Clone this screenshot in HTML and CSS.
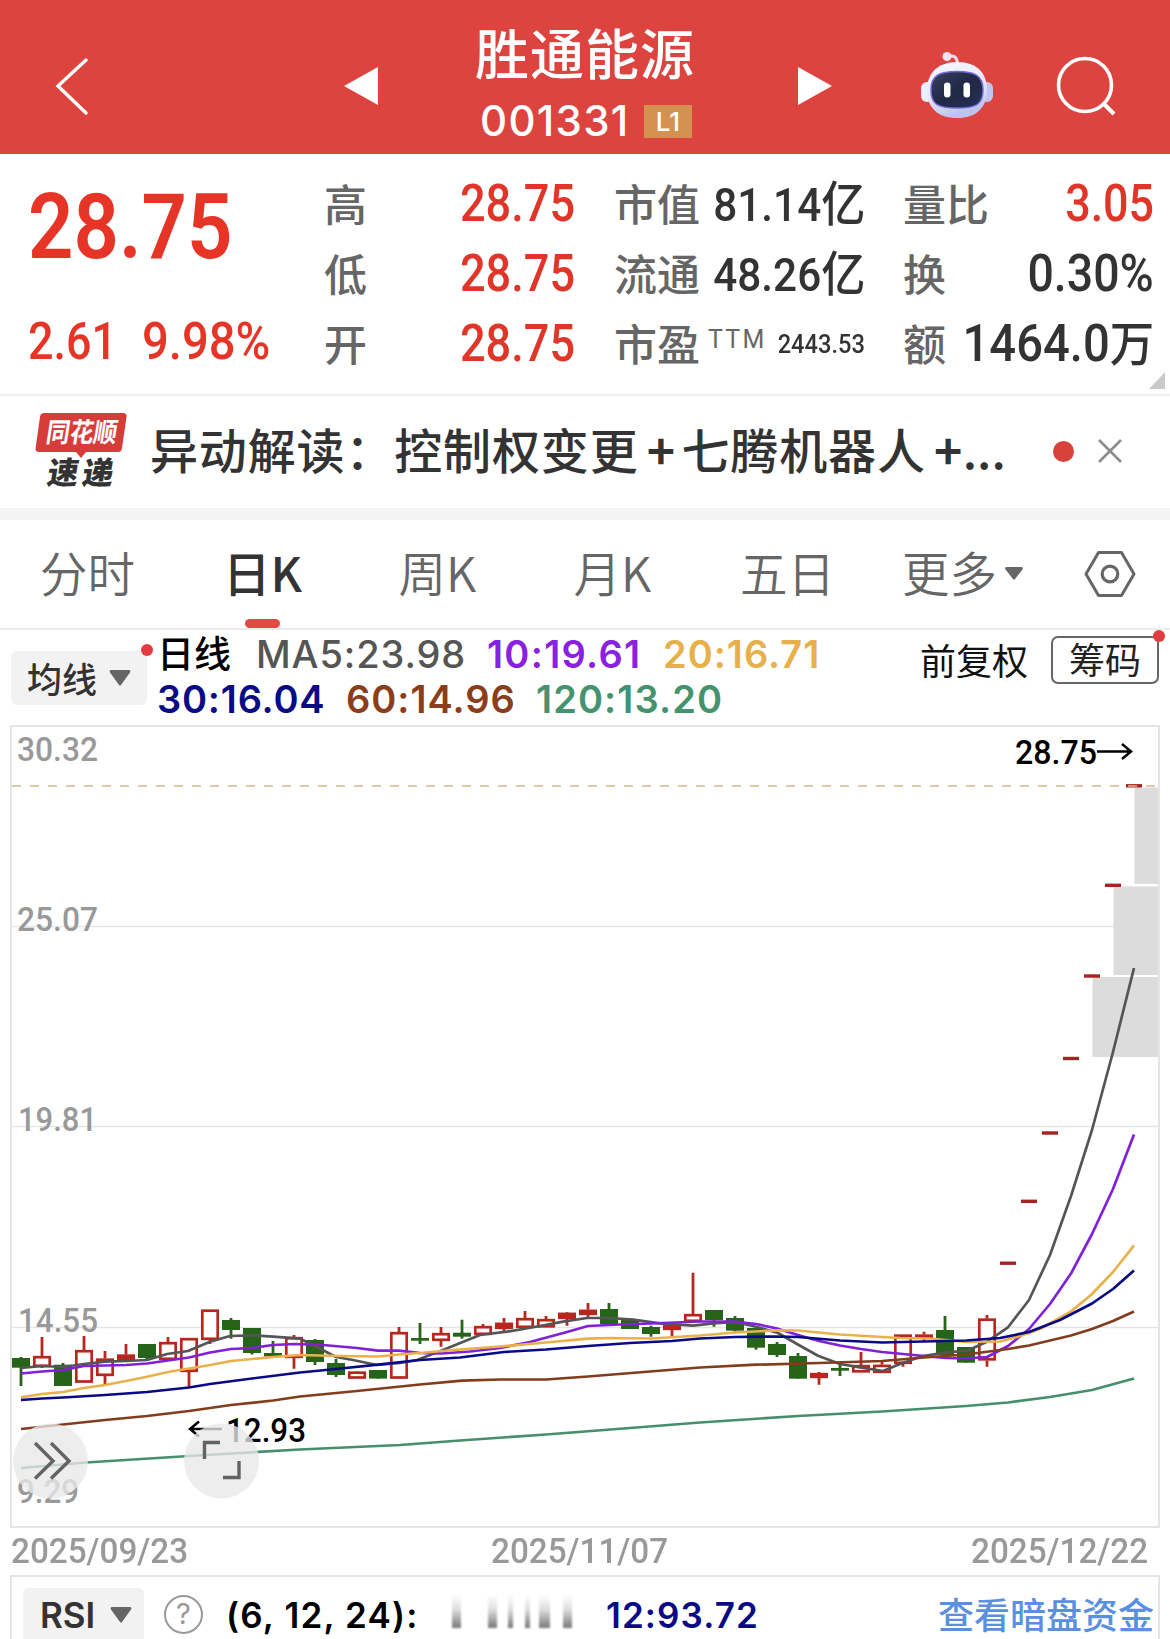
FILE: index.html
```html
<!DOCTYPE html>
<html lang="zh-CN">
<head>
<meta charset="utf-8">
<title>胜通能源 001331</title>
<link rel="stylesheet" href="styles.css">
</head>
<body>
<header class="topbar">
  <svg class="back" width="36" height="62" viewBox="0 0 36 62"><path d="M32 5 L4 31 L32 58" fill="none" stroke="#fff" stroke-width="3.4" stroke-linecap="round"/></svg>
  <svg class="prev" width="34" height="38" viewBox="0 0 34 38"><path d="M0 19 L34 0 V38 Z" fill="#fff"/></svg>
  <div class="stock">
    <h1>胜通能源</h1>
    <div class="code"><span>001331</span><b>L1</b></div>
  </div>
  <svg class="next" width="34" height="38" viewBox="0 0 34 38"><path d="M34 19 L0 0 V38 Z" fill="#fff"/></svg>
  <svg class="robot" width="74" height="70" viewBox="0 0 74 70">
    <defs>
      <linearGradient id="shell" x1="0" y1="0" x2="0.3" y2="1"><stop offset="0" stop-color="#fbfaff"/><stop offset=".65" stop-color="#e3e4fa"/><stop offset="1" stop-color="#bcc3ee"/></linearGradient>
      <linearGradient id="face" x1="0" y1="0" x2="1" y2="1"><stop offset="0" stop-color="#39425f"/><stop offset=".5" stop-color="#202845"/><stop offset="1" stop-color="#263154"/></linearGradient>
    </defs>
    <path d="M27 7 Q37 3 37.500 14" fill="none" stroke="#eed9e6" stroke-width="3"/>
    <circle cx="27" cy="6.500" r="4.500" fill="#f4e3ec"/>
    <rect x="1" y="32" width="12" height="20" rx="6" fill="#eeeeff"/>
    <rect x="61" y="32" width="12" height="20" rx="6" fill="#c3c5f1"/>
    <path d="M37 12 C58 12 67 24 67 40 C67 58 56 68 37 68 C18 68 7 58 7 40 C7 24 17 12 37 12Z" fill="url(#shell)"/>
    <path d="M37 21.500 C54 21.500 63 25 63 40 C63 54 57 58 37 58 C17 58 11 54 11 40 C11 25 20 21.500 37 21.500Z" fill="url(#face)" stroke="#7567d8" stroke-width="1.500"/>
    <rect x="24" y="32.500" width="6.500" height="15" rx="3.200" fill="#fff"/>
    <rect x="43.500" y="32.500" width="6.500" height="15" rx="3.200" fill="#fff"/>
  </svg>
  <svg class="search" width="64" height="64" viewBox="0 0 64 64"><circle cx="31" cy="31" r="26.500" fill="none" stroke="#fff" stroke-width="3.600"/><path d="M49 49 L60 60" stroke="#fff" stroke-width="4"/></svg>
</header>

<section class="quote">
  <div class="price">
    <strong class="din">28.75</strong>
    <div class="change"><span class="din">2.61</span><span class="din pct">9.98%</span></div>
  </div>
  <dl class="col c2">
    <div><dt>高</dt><dd class="up">28.75</dd></div>
    <div><dt>低</dt><dd class="up">28.75</dd></div>
    <div><dt>开</dt><dd class="up">28.75</dd></div>
  </dl>
  <dl class="col c3">
    <div><dt>市值</dt><dd>81.14<i>亿</i></dd></div>
    <div><dt>流通</dt><dd>48.26<i>亿</i></dd></div>
    <div><dt>市盈<sup>TTM</sup></dt><dd class="small">2443.53</dd></div>
  </dl>
  <dl class="col c4">
    <div><dt>量比</dt><dd class="up">3.05</dd></div>
    <div><dt>换</dt><dd>0.30%</dd></div>
    <div><dt>额</dt><dd class="amount">1464.0<i>万</i></dd></div>
  </dl>
  <svg class="corner" width="16" height="17" viewBox="0 0 16 17"><path d="M16 0 V17 H0Z" fill="#c9c9c9"/></svg>
</section>

<section class="news">
  <svg class="brand" width="94" height="84" viewBox="0 0 94 84">
    <path d="M9 2 H88 Q92 2 91.500 6 L87 37 Q86.500 41 83 41 H51 L46 47 L41 41 H4 Q0 41 .600 37 L5 6 Q5.500 2 9 2Z" fill="#d73c3a"/>
    <text class="brand-a" transform="translate(10 31) skewX(-9)" textLength="71" lengthAdjust="spacingAndGlyphs">同花顺</text>
    <text class="brand-b" transform="translate(11 73) skewX(-9)" textLength="66" lengthAdjust="spacing">速递</text>
  </svg>
  <p>异动解读：控制权变更<span class="plus">+</span>七腾机器人<span class="plus">+</span><span class="dots">...</span></p>
  <i class="dot"></i>
  <svg class="close" width="26" height="26" viewBox="0 0 26 26"><path d="M2 2 L24 24 M24 2 L2 24" stroke="#8c8c8c" stroke-width="2.600"/></svg>
</section>

<nav class="tabs">
  <a>分时</a><a class="on">日K</a><a>周K</a><a>月K</a><a>五日</a>
  <a>更多<svg width="18" height="13" viewBox="0 0 18 13"><path d="M1 0 H17 Q18.500 1 17.500 2.500 L10 12 Q9 13.500 8 12 L.500 2.500 Q-.500 1 1 0Z" fill="#666"/></svg></a>
  <span class="gear"><svg width="52" height="48" viewBox="0 0 52 48"><path d="M14.500 2.500 H37.500 L50 24 L37.500 45.500 H14.500 L2 24Z" fill="none" stroke="#666" stroke-width="3" stroke-linejoin="round"/><circle cx="26" cy="24" r="7.800" fill="none" stroke="#666" stroke-width="3.200"/></svg></span>
</nav>

<section class="ma">
  <div class="pick">均线<svg width="22" height="16" viewBox="0 0 22 16"><path d="M1.500 0 H20.500 Q22 1 21 2.500 L12 15 Q11 16.500 10 15 L1 2.500 Q0 1 1.500 0Z" fill="#666"/></svg><i class="badge"></i></div>
  <div class="values">
    <div><b class="kx">日线</b><span class="m5">MA5:23.98</span><span class="m10">10:19.61</span><span class="m20">20:16.71</span></div>
    <div><span class="m30">30:16.04</span><span class="m60">60:14.96</span><span class="m120">120:13.20</span></div>
  </div>
  <span class="adjust">前复权</span>
  <span class="chips">筹码<i class="badge"></i></span>
</section>

<svg class="chart" width="1170" height="806" viewBox="0 724 1170 806">
  <rect x="11" y="726" width="1148" height="801" fill="#fff" stroke="#e5e5e5" stroke-width="2"/>
  <path d="M12 926.500H1158M12 1126.500H1158M12 1327.500H1158" stroke="#e5e5e5" stroke-width="1.500"/>
  <g fill="#dcdcdc"><rect x="1134.500" y="787.500" width="23.500" height="96.500"/><rect x="1113.500" y="886.500" width="44.500" height="88.500"/><rect x="1092.500" y="977" width="65.500" height="80"/></g>
  <g class="axis">
    <text x="17" y="760.500" textLength="81" lengthAdjust="spacingAndGlyphs">30.32</text>
    <text x="17" y="930.500" textLength="81" lengthAdjust="spacingAndGlyphs">25.07</text>
    <text x="18" y="1131" textLength="79" lengthAdjust="spacingAndGlyphs">19.81</text>
    <text x="18" y="1332" textLength="80" lengthAdjust="spacingAndGlyphs">14.55</text>
    <text x="17" y="1503" textLength="62" lengthAdjust="spacingAndGlyphs">9.29</text>
  </g>
  <g id="candles"></g>
  <path d="M12 786H1158" stroke="#d8b98c" stroke-width="1.500" stroke-dasharray="9 9"/>
  <g id="lines" fill="none" stroke-width="2.700" stroke-linejoin="round"></g>
  <g class="mark">
    <text x="1015" y="764" textLength="82" lengthAdjust="spacingAndGlyphs">28.75</text>
    <path d="M1097 751.500H1131M1122 744L1131 751.500L1122 759"/>
    <text x="226" y="1442" textLength="80" lengthAdjust="spacingAndGlyphs">12.93</text>
    <path d="M190 1429H222M199 1421.500L190 1429L199 1436.500"/>
  </g>
  <g fill="#e8e8e8" fill-opacity=".78"><circle cx="50.500" cy="1461" r="37.500"/><circle cx="221.500" cy="1461" r="37.500"/></g>
  <path d="M35 1443L53 1461L35 1478.500M51 1443L69 1461L51 1478.500M204.500 1459V1442.500H220M239 1461V1477.500H223" fill="none" stroke="#636363" stroke-width="3.400"/>
</svg>

<div class="dates"><span>2025/09/23</span><span>2025/11/07</span><span>2025/12/22</span></div>

<section class="rsi">
  <div class="pick2">RSI<svg width="22" height="16" viewBox="0 0 22 16"><path d="M1.500 0 H20.500 Q22 1 21 2.500 L12 15 Q11 16.500 10 15 L1 2.500 Q0 1 1.500 0Z" fill="#666"/></svg></div>
  <span class="help">?</span>
  <span class="params">(6, 12, 24):</span>
  <span class="fade"><i></i><i></i><i></i><i></i><i></i><i></i></span>
  <span class="r12">12:93.72</span>
  <a>查看暗盘资金</a>
</section>
<script src="chart.js"></script>
</body>
</html>
```
FILE: styles.css
```css
* { box-sizing: border-box; margin: 0; padding: 0; }
body { width: 1170px; height: 1639px; overflow: hidden; background: #fff; color: #333; font-family: Inter, "Noto Sans CJK SC", sans-serif; }
i { font-style: normal; }
svg { display: block; flex: none; }

.topbar { display: flex; align-items: flex-start; height: 154px; background: #dd4440; color: #fff; }
.back { margin: 55px 0 0 54px; }
.prev { margin: 67px 0 0 254px; }
.stock { width: 216px; margin-left: 98px; padding-top: 19px; }
.stock h1 { font: 500 54px/66px "Noto Sans CJK SC", sans-serif; letter-spacing: 1px; text-indent: -1px; white-space: nowrap; }
.code { display: flex; align-items: center; justify-content: space-between; height: 34px; margin-top: 19px; padding-left: 4px; }
.code span { font: 500 42px/34px Inter, sans-serif; letter-spacing: 1.3px; }
.code b { width: 48px; height: 33px; background: #d49150; font: 500 26px/33px Inter, sans-serif; text-align: center; }
.next { margin: 67px 0 0 106px; }
.robot { margin: 50px 0 0 88px; }
.search { margin: 54px 0 0 60px; }

.quote { position: relative; display: flex; height: 242px; padding-top: 16px; border-bottom: 2px solid #eee; font-family: Roboto, "Noto Sans CJK SC", sans-serif; }
.price { width: 324px; padding-left: 28px; color: #e63526; }
.price strong { display: block; width: 240px; padding-top: 12px; font-size: 91px; line-height: 90px; font-weight: 600; transform: scaleX(.875); transform-origin: left; }
.change { display: flex; padding-top: 35px; font-size: 51px; line-height: 70px; font-weight: 500; white-space: nowrap; }
.change .din { width: 114px; transform: scaleX(.88); transform-origin: left; }
.change .pct { transform: scaleX(.925); }
.col { display: flex; flex-direction: column; }
.col div { display: flex; justify-content: space-between; height: 70px; line-height: 68px; white-space: nowrap; }
.col dt { color: #666; font: 500 43px/64px "Noto Sans CJK SC", sans-serif; }
.col dd { font-size: 51px; font-weight: 500; transform: scaleX(.885); transform-origin: right; }
.col dd.up { color: #e03629; }
.col dd i { font-family: "Noto Sans CJK SC", sans-serif; font-size: 48px; font-weight: 500; }
.c2 { width: 251px; }
.c3 { width: 251px; margin-left: 39px; }
.c4 { width: 251px; margin-left: 38px; }
.c3 dd { font-size: 46px; line-height: 60px; transform: scaleX(.92); }
.c4 dd { transform: scaleX(.91); }
.c4 dd.up { transform: scaleX(.88); }
.c4 .amount { line-height: 60px; transform: scaleX(.925); }
.c3 dd.small { font-size: 26px; line-height: 68px; transform: scaleX(.91); }
.c3 sup { margin-left: 8px; font: 400 25px/25px Roboto, sans-serif; letter-spacing: 2.2px; vertical-align: 13px; }
.corner { position: absolute; right: 5px; bottom: 5px; }

.news { display: flex; align-items: center; height: 124px; padding-bottom: 2px; border-bottom: 12px solid #f4f4f4; }
.brand { margin: 3px 0 0 35px; overflow: visible; }
.brand-a { font: 700 27px "Noto Sans CJK SC", sans-serif; fill: #fff; }
.brand-b { font: 900 31px "Noto Sans CJK SC", sans-serif; fill: #333; }
.news p { width: 860px; margin: -6px 0 0 21px; font: 500 48px/60px "Noto Sans CJK SC", sans-serif; letter-spacing: .85px; white-space: nowrap; }
.plus { display: inline-block; width: 43px; padding-left: 2px; text-align: center; font-weight: 700; letter-spacing: 0; }
.dots { display: inline-block; margin-left: -6px; letter-spacing: 0; }
.dot { width: 21px; height: 21px; margin-left: 43px; border-radius: 50%; background: #d9413b; }
.close { margin-left: 23px; }

.tabs { display: flex; height: 110px; border-bottom: 2px solid #ececec; }
.tabs a { position: relative; display: flex; align-items: center; justify-content: center; width: 175px; padding-bottom: 4px; font: 350 47.5px/60px "Noto Sans CJK SC", sans-serif; color: #666; }
.tabs a svg { margin: 3px 0 0 8px; }
.tabs .on { font-weight: 500; color: #333; }
.tabs .on::after { content: ""; position: absolute; left: 70px; bottom: 0; width: 35px; height: 9px; border-radius: 5px; background: #e04a43; }
.gear { display: flex; align-items: center; margin-left: 34px; }

.ma { display: flex; height: 94px; }
.pick { position: relative; display: flex; align-items: center; justify-content: space-between; width: 136px; height: 54px; margin: 21px 0 0 11px; padding: 0 16px; border-radius: 6px; background: #f2f2f2; font: 500 35px/50px "Noto Sans CJK SC", sans-serif; }
.badge { position: absolute; right: -6px; top: -7px; width: 12px; height: 12px; border-radius: 50%; background: #e33c40; }
.values { width: 760px; margin-left: 10px; padding-top: 2px; font-size: 38px; font-weight: 500; }
.values div { display: flex; height: 45px; line-height: 45px; white-space: nowrap; }
.kx { width: 99px; font: 500 37px/41px "Noto Sans CJK SC", sans-serif; color: #000; }
.m5 { width: 231px; color: #555; letter-spacing: .9px; }
.m10 { width: 176px; color: #8a20e0; font-weight: 600; letter-spacing: 1.3px; }
.m20 { color: #e8b04a; font-weight: 600; letter-spacing: 1px; }
.m30 { width: 189px; color: #0a0a85; font-weight: 600; letter-spacing: .8px; }
.m60 { width: 190px; color: #8b3e1c; font-weight: 600; letter-spacing: 1px; }
.m120 { color: #45936d; font-weight: 600; letter-spacing: 1.1px; }
.adjust { margin-left: 3px; color: #111; font: 400 36px/58px "Noto Sans CJK SC", sans-serif; white-space: nowrap; }
.chips { position: relative; width: 108px; height: 48px; margin: 6px 11px 0 auto; border: 2px solid #666; border-radius: 7px; color: #222; text-align: center; font: 400 36px/41px "Noto Sans CJK SC", sans-serif; }
.chips .badge { right: -8px; top: -8px; }

.chart .axis { font: 500 34px Roboto, sans-serif; fill: #999; }
.mark { font: 500 34px Roboto, sans-serif; fill: #000; }
.mark path { fill: none; stroke: #000; stroke-width: 2.5px; }

.dates { display: flex; justify-content: space-between; height: 45px; padding: 0 23px 0 11px; font: 500 35px/43px Roboto, sans-serif; color: #999; }
.dates span { width: 176px; white-space: nowrap; transform: scaleX(.95); transform-origin: left; }

.rsi { display: flex; width: 1150px; height: 70px; margin-left: 10px; padding-top: 11px; border: 2px solid #e5e5e5; font-weight: 600; font-size: 35px; line-height: 55px; white-space: nowrap; }
.pick2 { display: flex; align-items: center; justify-content: space-between; width: 121px; height: 54px; margin-left: 11px; padding: 0 12px 0 17px; border-radius: 5px; background: #f2f2f2; }
.help { width: 39px; height: 39px; margin: 7px 0 0 20px; border: 2.5px solid #999; border-radius: 50%; color: #999; text-align: center; font: 400 29px/34px Inter, sans-serif; }
.params { width: 223px; margin-left: 23px; color: #000; letter-spacing: 1.2px; }
.fade { display: flex; align-items: flex-start; width: 126px; padding: 7px 0 0 3px; }
.fade i { flex: none; width: 9px; height: 33px; margin-right: 11px; background: linear-gradient(#fff, #ddd 45%, #777); filter: blur(.8px); }
.fade i:nth-child(1) { margin-right: 27px; }
.fade i:nth-child(3), .fade i:nth-child(4) { width: 5px; margin-right: 12px; }
.fade i:nth-child(4) { margin-right: 9px; }
.fade i:nth-child(5) { width: 11px; margin-right: 13px; }
.r12 { margin-left: 31px; color: #0a0a85; letter-spacing: 1.1px; }
.rsi a { margin: 0 4px 0 auto; color: #5b8fdf; font: 500 36px/50px "Noto Sans CJK SC", sans-serif; }
```
FILE: chart.js
```js
const NS = 'http://www.w3.org/2000/svg';
const draw = (parent, name, attrs) => {
  const el = document.createElementNS(NS, name);
  for (const k in attrs) el.setAttribute(k, attrs[k]);
  document.getElementById(parent).append(el);
};

// direction, body top, body bottom, wick high, wick low
const candles = [
  ['g',1358,1367.7,1357,1386],['r',1356,1367,1337,1368],['g',1364.7,1386,1363,1386],['r',1350,1382.7,1336,1383],
  ['r',1358.5,1376,1351,1386],['r',1354.5,1361,1344,1361],['g',1344,1358,1344,1360],['r',1342,1360,1337,1360],
  ['r',1338,1372,1338,1387],['r',1309.5,1340,1309.5,1344],['g',1320,1330,1318,1338.7],['g',1328,1353,1328,1354.5],
  ['g',1353,1356.5,1341,1356.5],['r',1337,1358,1335,1368.7],['g',1340,1362,1339,1365],['g',1363,1375,1359,1377],
  ['r',1371.5,1378.7,1371,1378.7],['g',1370,1378.6,1370,1378.6],['r',1332,1378.7,1327,1378.7],['g',1338,1340.7,1323,1344],
  ['r',1333,1341,1327,1346.7],['g',1332.7,1336.7,1319.7,1338.7],['r',1326,1335,1324,1335],['r',1322.7,1329,1318,1331],
  ['r',1318,1328,1311,1328],['r',1319,1327.5,1316,1327.5],['r',1312.7,1319,1312,1325.7],['r',1309.7,1315,1303,1317],
  ['g',1309,1324,1303,1324],['g',1320,1329,1320,1329],['g',1327,1334,1325.7,1336.7],['r',1325,1330,1325,1336],
  ['r',1314,1322,1272.7,1322],['g',1310,1320,1310,1326.7],['g',1318,1330.7,1316,1331.7],['g',1328,1347.7,1328,1349.7],
  ['g',1344,1355,1342,1357],['g',1356,1378.7,1353,1378.7],['r',1373,1378,1372,1384.7],['g',1368,1370.7,1363,1376],
  ['r',1365,1372.5,1352,1372.5],['r',1364.7,1373,1361.7,1373],['r',1334.5,1364,1334.5,1366.7],['r',1334.5,1338,1331.7,1342],
  ['g',1330,1355,1316,1355],['g',1347,1362.7,1347,1362.7],['r',1318.5,1360.5,1315,1366.7]
];
const RED = '#b8261d', GREEN = '#26641a';
candles.forEach(([dir, top, bottom, high, low], i) => {
  const x = 21 + i * 21;
  if (dir === 'g') {
    draw('candles', 'path', { d: `M${x} ${high}V${low}`, stroke: GREEN, 'stroke-width': 2.8 });
    draw('candles', 'rect', { x: x - 9, y: top, width: 18, height: bottom - top, fill: GREEN });
  } else {
    draw('candles', 'path', { d: `M${x} ${high}V${top}M${x} ${bottom}V${low}`, stroke: RED, 'stroke-width': 2.8 });
    draw('candles', 'rect', { x: x - 7.7, y: top + 1.2, width: 15.4, height: bottom - top - 2.4, fill: bottom - top < 7 ? RED : '#fff', stroke: RED, 'stroke-width': 2.7 });
  }
});

// one-price limit-up sessions
[1263.2, 1201.3, 1133, 1058.5, 976, 885.3, 785.8].forEach((y, i) => {
  draw('candles', 'rect', { x: 1000 + i * 21, y: y - 1.7, width: 16, height: 3.4, fill: '#a8231f' });
});

const lines = [
  ['#458f6b', '21,1468 86,1462.5 189,1456 300,1449.5 400,1445 460,1440.5 546,1434.5 630,1428 700,1422.5 798,1416 882,1411.5 966,1406 1008,1402.5 1050,1397 1092,1390 1134,1378.5'],
  ['#555', '21,1368 42,1366 63,1367 84,1364 105,1361.7 126,1361 147,1360 167,1354 188,1351 210,1341.7 230,1336 253,1335.3 273,1336.7 300,1338.7 315,1346 336,1357 353,1360 377,1365 400,1363 417,1360 443,1350 480,1335 507,1331.7 540,1326 563,1321.7 587,1318 610,1318 633,1319.7 660,1323.3 693,1325.7 713,1323.3 735,1322 757,1327 778,1333 797,1344 818,1355.7 840,1364 860,1367.3 883,1371 903,1362.7 923,1356 945,1352.7 967,1350.7 987,1341.7 1008,1327.3 1029,1300 1050,1255 1071,1196 1092,1130 1113,1052 1134,968'],
  ['#8020d8', '21,1373.5 42,1371.5 63,1370 84,1366 105,1365.5 126,1365 147,1363.5 168,1360.5 189,1357.5 210,1352.5 231,1349 252,1348 273,1345 294,1344 323,1345 357,1348 378,1350.6 399,1350.6 420,1353 441,1353.5 470,1351.5 500,1348 530,1342 567,1332 588,1326 620,1324.5 651,1323.5 700,1321.5 735,1321.5 756,1324 777,1328.5 798,1335 819,1341 840,1345.5 861,1349 882,1352 903,1354 924,1356 945,1358 966,1358.5 987,1357 1008,1346 1029,1329 1050,1304 1071,1273.5 1092,1234 1113,1189 1134,1134.5'],
  ['#eab14b', '21,1397.3 42,1394 63,1392 84,1388 105,1385 126,1381 147,1376.7 168,1372 189,1368.5 210,1365 231,1361 252,1359 273,1357 300,1355 340,1356 378,1356.5 399,1354.5 420,1353 460,1349.5 500,1346.5 546,1342.5 588,1338.7 610,1338 651,1338.5 700,1335.5 735,1332.5 777,1330.3 798,1330.5 840,1334.5 900,1338 930,1338.5 966,1342 1000,1341.5 1020,1336 1040,1329 1071,1311.5 1092,1294 1113,1272 1134,1245.3'],
  ['#0a0a85', '21,1400 42,1398.5 63,1397.5 105,1395 147,1392 189,1387.5 210,1384 252,1378.5 300,1372.5 336,1369 378,1364.7 420,1360 460,1357.5 504,1352 546,1349.5 588,1346 630,1343 672,1341 700,1338.5 735,1337 777,1336.5 798,1337 840,1340.5 882,1342.5 903,1342 945,1341 966,1340.5 1000,1338 1029,1332 1060,1320 1092,1303.5 1113,1289 1134,1270.5'],
  ['#833d1d', '21,1429 63,1424.5 105,1420 147,1416 189,1411 231,1405 273,1400.5 300,1396.5 357,1391 420,1384.5 462,1380.7 500,1379.5 546,1379.5 588,1376.5 650,1371.5 700,1367.5 756,1364.7 819,1363 882,1361 924,1357.5 966,1354.5 1008,1349 1029,1345.5 1071,1335.5 1092,1329 1113,1321 1134,1311.5']
];
lines.forEach(([stroke, points]) => draw('lines', 'polyline', { points, stroke }));
```
